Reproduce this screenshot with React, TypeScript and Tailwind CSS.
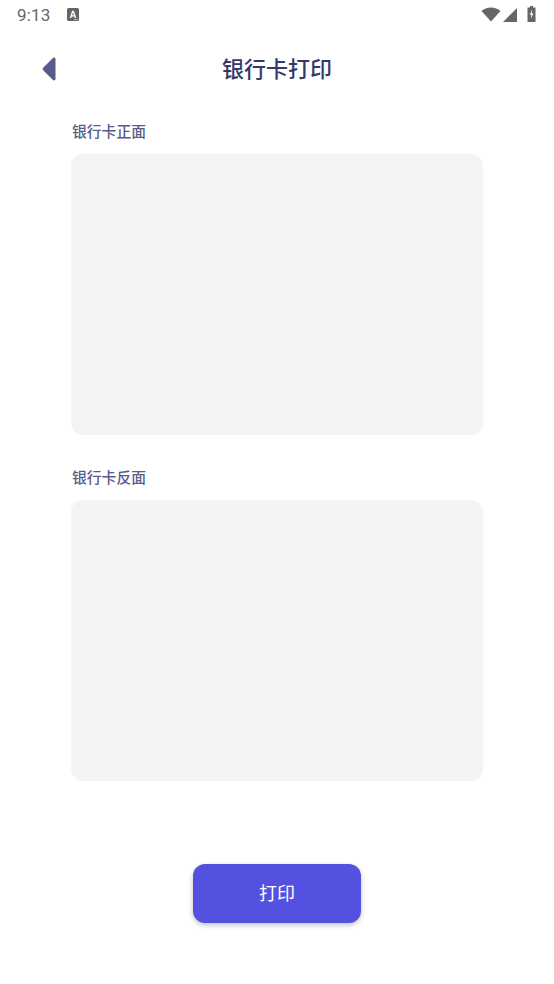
const cjk = "font-['Roboto','Noto_Sans_CJK_SC',sans-serif]";

function StatusBar() {
  return (
    <div className="flex h-[30px] items-center justify-between pl-[17px] pr-[18px] text-[#666666]">
      <div className="flex items-center gap-[16px]">
        <span className="font-['Roboto',sans-serif] text-[17px] leading-[30px] tracking-[0.2px]">9:13</span>
        <svg width="12" height="13" viewBox="0 0 12 13" className="mt-[-1px]">
          <rect width="12" height="13" rx="1.5" fill="#666" />
          <path d="M2.700 10 5.200 2.800h1.600L9.300 10H7.800l-.5-1.500H4.700L4.200 10zM5.100 7.200h1.800L6 4.500z" fill="#fff" />
          <rect x="7" y="11" width="3.500" height="0.800" fill="#ccc" />
        </svg>
      </div>
      <div className="flex items-center">
        <svg width="20" height="15" viewBox="0 0 20 15" className="mt-[-1px]">
          <path d="M0.500 4C3 1.700 6.300.5 10 .5s7 1.200 9.500 3.500L10 14.500z" fill="#666" />
        </svg>
        <svg width="14" height="14" viewBox="0 0 14 14" className="ml-[2px] mt-[-1px]">
          <path d="M14 0v14H0z" fill="#666" />
        </svg>
        <svg width="9" height="16" viewBox="0 0 9 16" className="ml-[10px] mt-[-2px]">
          <path d="M3 0h3v1.500h2.500V16H.5V1.500H3z" fill="#666" />
          <path d="M5.200 3.500 2.700 8.700h1.700L3.800 12.800l2.600-5.400H4.700z" fill="#fff" />
        </svg>
      </div>
    </div>
  );
}

function Panel({ label }: { label: string }) {
  return (
    <section>
      <h2 className="pl-[1px] text-[14.8px] font-medium leading-[20px] text-[#565d8c]">{label}</h2>
      <div className="mt-[12px] h-[281px] rounded-[12px] bg-[#f4f4f4]" />
    </section>
  );
}

export default function App() {
  return (
    <div className={`${cjk} flex h-[984px] w-[554px] flex-col bg-white`}>
      <StatusBar />
      <header className="relative mt-[23px] flex h-[34px] items-center justify-center">
        <svg width="14" height="24" viewBox="0 0 14 24" className="absolute left-[42px] top-[4px]">
          <path d="M12 .5c1 0 1.500.7 1.500 1.700v19.600c0 1-.5 1.700-1.500 1.700-.5 0-.9-.3-1.300-.7L1.200 13.300c-.7-.8-.7-1.800 0-2.600L10.700 1.200C11.100.8 11.500.5 12 .5z" fill="#565d8c" />
        </svg>
        <h1 className="text-[22px] font-medium leading-[34px] text-[#34386b]">银行卡打印</h1>
      </header>
      <main className="mt-[35px] flex flex-col gap-[33px] px-[71px]">
        <Panel label="银行卡正面" />
        <Panel label="银行卡反面" />
      </main>
      <div className="mt-[83px] flex justify-center">
        <button className="h-[59px] w-[168px] rounded-[12px] bg-[#5551e0] text-[18px] text-white shadow-[0_2px_5px_rgba(0,0,0,0.25)]">
          打印
        </button>
      </div>
    </div>
  );
}
